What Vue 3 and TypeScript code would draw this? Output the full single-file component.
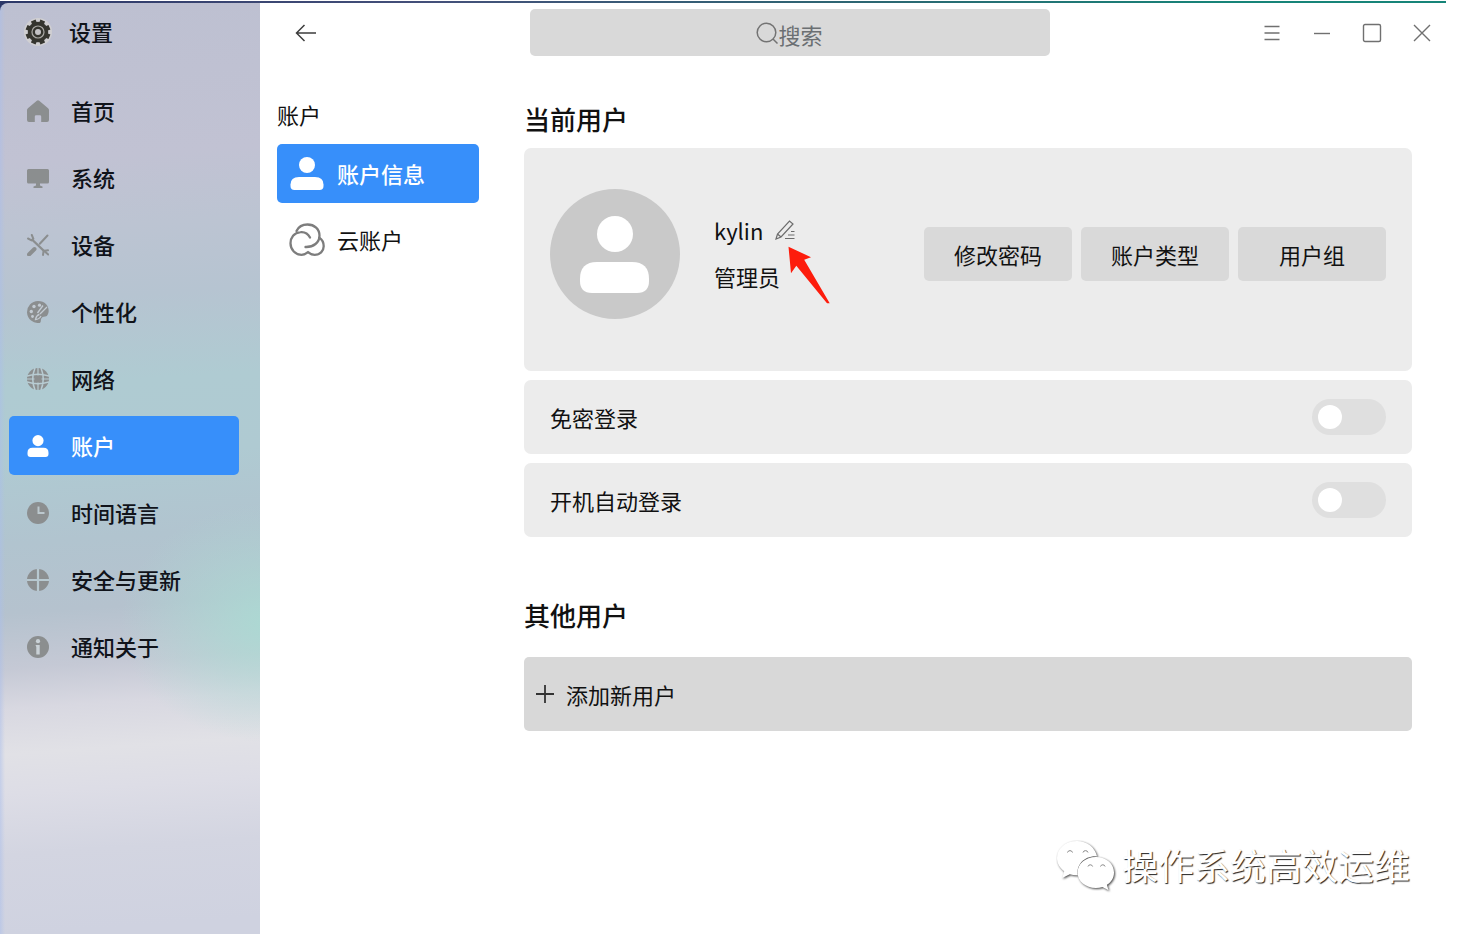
<script setup lang="ts">
import { ref } from 'vue'

interface NavItem {
  id: string
  label: string
}

const navItems: NavItem[] = [
  { id: 'home', label: '首页' },
  { id: 'system', label: '系统' },
  { id: 'device', label: '设备' },
  { id: 'personal', label: '个性化' },
  { id: 'network', label: '网络' },
  { id: 'account', label: '账户' },
  { id: 'time', label: '时间语言' },
  { id: 'update', label: '安全与更新' },
  { id: 'about', label: '通知关于' },
]

const active = ref<string>('account')
const page = ref<string>('info')
const query = ref<string>('')
const noPassword = ref<boolean>(false)
const autoLogin = ref<boolean>(false)
const accountActions: string[] = ['修改密码', '账户类型', '用户组']
</script>

<template>
  <div class="desktop">
    <div class="window">
      <aside class="sidebar">
        <div class="brand">
          <svg class="brand-icon" viewBox="0 0 30 30" aria-hidden="true">
            <circle cx="15" cy="15" r="14" fill="#d0cfd2" />
            <circle cx="15" cy="15" r="8" fill="none" stroke="#35352f" stroke-width="4.500" />
            <g stroke="#35352f" stroke-width="5">
              <path d="M15 2.6v4M15 23.4v4M2.6 15h4M23.4 15h4" transform="rotate(22.5 15 15)" />
              <path d="M15 2.6v4M15 23.4v4M2.6 15h4M23.4 15h4" transform="rotate(67.5 15 15)" />
            </g>
            <circle cx="15" cy="15" r="6.600" fill="#a9a8a4" />
            <circle cx="15" cy="15" r="4.200" fill="#c4c3c6" stroke="#35352f" stroke-width="2.400" />
          </svg>
          <span>设置</span>
        </div>
        <nav class="nav">
          <button
            v-for="item in navItems"
            :key="item.id"
            type="button"
            class="nav-item"
            :class="{ active: active === item.id }"
            @click="active = item.id"
          >
            <svg class="nav-icon" viewBox="0 0 22 22" aria-hidden="true">
              <path
                v-if="item.id === 'home'"
                d="M9.8.7a2 2 0 0 1 2.4 0l8.6 7.4q1.2 1.1 1.2 2V20q0 2-2 2h-5.800v-5.500q0-1.300-1.300-1.300h-3.800q-1.300 0-1.300 1.300V22H2q-2 0-2-2v-9.900q0-1 1.200-2z"
                fill="currentColor"
              />
              <path
                v-else-if="item.id === 'system'"
                d="M1.500 2h19q1.500 0 1.500 1.500v11.500q0 1.500-1.500 1.500H13v2l2.500 1v1.500h-9v-1.500l2.500-1v-2H1.500Q0 16.500 0 15V3.500Q0 2 1.500 2z"
                fill="currentColor"
              />
              <g v-else-if="item.id === 'device'" fill="none" stroke="currentColor" stroke-linecap="round">
                <path d="M5.500 6l11 10.500" stroke-width="2.400" />
                <path d="M1 4.500l3.500 1.800 1.800-1.600L4.800 1M16 21l.6-4.200 4.400-.6M21.200 20.500l-2.800-2.600" stroke-width="2" />
                <path d="M20.500 1.500L12.800 9.800" stroke-width="2" />
                <path d="M7.500 15l-5.500 5.500" stroke-width="4" />
              </g>
              <g v-else-if="item.id === 'personal'">
                <path
                  d="M11 0a11 11 0 1 0 1.500 21.900c2-.4 1-3 1.800-4.500 1-2 3.500-1.400 5.600-2.400C24 10 21 0 11 0z"
                  fill="currentColor"
                />
                <g fill="#c3cbd3">
                  <circle cx="7" cy="5.500" r="1.700" />
                  <circle cx="12.500" cy="4.200" r="1.600" />
                  <circle cx="4.300" cy="10.500" r="1.700" />
                  <circle cx="5.500" cy="15.500" r="1.400" />
                </g>
                <path d="M20 6L13 13M16 4.500L10.500 12M12.500 13.500q-3 .500-4 5 3.500 0 5.500-3.500" stroke="#c3cbd3" stroke-width="1.300" fill="none" />
              </g>
              <g v-else-if="item.id === 'network'">
                <circle cx="11" cy="11" r="11" fill="currentColor" />
                <g fill="none" stroke="#b8ccd3" stroke-width="1.500">
                  <path d="M8 0Q3.500 11 8 22M14 0q4.500 11 0 22M0 8q11-3.500 22 0M0 14q11 3.500 22 0" />
                  <path d="M11 0v7.500M11 14.500v7.500M0 11h7.500M14.500 11h7.500" stroke-width="1.200" />
                </g>
              </g>
              <path
                v-else-if="item.id === 'account'"
                d="M11 0a5.600 5.600 0 1 1 0 11.200A5.600 5.600 0 0 1 11 0zM5.500 12.800h11q5 0 5 5V19q0 3-3 3h-15q-3 0-3-3v-1.200q0-5 5-5z"
                fill="currentColor"
              />
              <g v-else-if="item.id === 'time'">
                <circle cx="11" cy="11" r="11" fill="currentColor" />
                <path d="M11.500 4.500v6.500h6" fill="none" stroke="#bcc8ce" stroke-width="2" />
              </g>
              <g v-else-if="item.id === 'update'">
                <circle cx="11" cy="11" r="11" fill="currentColor" />
                <path d="M11 0v22M0 11h22" stroke="#b8c9d0" stroke-width="2.200" />
              </g>
              <g v-else>
                <circle cx="11" cy="11" r="11" fill="currentColor" />
                <circle cx="11" cy="5.200" r="2.100" fill="#c9d1d6" />
                <path d="M8.500 9h4.200v9.500H9.300v-7.500z" fill="#c9d1d6" />
              </g>
            </svg>
            <span>{{ item.label }}</span>
          </button>
        </nav>
      </aside>

      <div class="content">
        <header class="titlebar">
          <button type="button" class="back" aria-label="返回">
            <svg viewBox="0 0 22 18" width="22" height="18" fill="none" stroke="#3d3d3d" stroke-width="1.500">
              <path d="M21 9H1.500M9.500 1L1.500 9l8 8" />
            </svg>
          </button>
          <label class="search">
            <svg viewBox="0 0 22 22" width="22" height="22" fill="none" stroke="#737373" stroke-width="1.500" aria-hidden="true">
              <circle cx="10.500" cy="10.500" r="9.300" />
              <path d="M17 17l4.500 4.500" />
            </svg>
            <input v-model="query" type="text" placeholder="搜索" aria-label="搜索" />
          </label>
          <div class="controls">
            <button type="button" aria-label="菜单">
              <svg viewBox="0 0 20 20"><path d="M2.500 3.500h15M2.500 10h15M2.500 16.500h15" /></svg>
            </button>
            <button type="button" aria-label="最小化">
              <svg viewBox="0 0 20 20"><path d="M2 10.500h16" /></svg>
            </button>
            <button type="button" aria-label="最大化">
              <svg viewBox="0 0 20 20"><rect x="1.500" y="1.500" width="17" height="17" rx="1.500" /></svg>
            </button>
            <button type="button" aria-label="关闭">
              <svg viewBox="0 0 20 20"><path d="M2 2l16 16M18 2L2 18" /></svg>
            </button>
          </div>
        </header>

        <div class="body">
          <nav class="subnav">
            <h2 class="subnav-title">账户</h2>
            <button type="button" class="sub-item" :class="{ active: page === 'info' }" @click="page = 'info'">
              <svg viewBox="0 0 36 36" width="36" height="36" fill="currentColor" aria-hidden="true">
                <circle cx="18" cy="9" r="8" />
                <path d="M10 21h16q8.500 0 8.500 7.500v1.500q0 4-4 4h-25q-4 0-4-4v-1.500q0-7.500 8.500-7.500z" />
              </svg>
              <span>账户信息</span>
            </button>
            <button type="button" class="sub-item" :class="{ active: page === 'cloud' }" @click="page = 'cloud'">
              <svg viewBox="0 0 36 34" width="36" height="34" fill="none" stroke="#7d7d7d" stroke-width="2.300" stroke-linecap="round" aria-hidden="true">
                <path d="M7.500 8C9.500 3.800 13.500 1.500 18.500 1.500c7 0 12 4.700 12 11.200C30.500 19.500 24.500 24.300 16.500 24" />
                <path d="M21 14.500C19 10.500 15.500 8.700 11.500 9.100 5 9.600 1.500 14.800 1.500 20.300c0 6.700 5 11.500 11 11.500 3 0 5-1.300 6.500-2.600 1.800 1.700 4.300 2.600 6.700 2.600 5.200 0 9-3.800 9-8.600 0-4-1.500-6.700-4.500-8.500" />
              </svg>
              <span>云账户</span>
            </button>
          </nav>

          <main class="main">
            <h1 class="heading">当前用户</h1>
            <section class="panel profile">
              <svg class="avatar" viewBox="0 0 130 130" aria-hidden="true">
                <circle cx="65" cy="65" r="65" fill="#c9c9c9" />
                <circle cx="65" cy="45" r="18" fill="#fff" />
                <path d="M47 73h35q17 0 17 17v2q0 12-12 12H42q-12 0-12-12v-2q0-17 17-17z" fill="#fff" />
              </svg>
              <div class="identity">
                <div class="name-row">
                  <span>kylin</span>
                  <button type="button" class="edit" aria-label="修改用户名">
                    <svg viewBox="0 0 20 20" width="20" height="20" fill="none" stroke="#6c6c6c" stroke-width="1.200">
                      <path d="M1 19l1.500-5L14.500 1l3.500 3L6 17zM2.500 14L6 17" />
                      <path d="M16 11.500h3.500M13 15h6.500M10 18.500h9.500" />
                    </svg>
                  </button>
                  <svg class="pointer" viewBox="0 0 42 58" width="42" height="58" aria-hidden="true">
                    <path d="M.5.700L23 11.200l-6.800 2.600L41.700 57.300 39 57.300 8.300 19.700 3 27.300z" fill="#fd1c0c" />
                  </svg>
                </div>
                <span>管理员</span>
              </div>
              <div class="actions">
                <button v-for="action in accountActions" :key="action" type="button">{{ action }}</button>
              </div>
            </section>
            <label class="panel setting">
              <span>免密登录</span>
              <input v-model="noPassword" class="switch" type="checkbox" role="switch" />
            </label>
            <label class="panel setting">
              <span>开机自动登录</span>
              <input v-model="autoLogin" class="switch" type="checkbox" role="switch" />
            </label>
            <h1 class="heading others">其他用户</h1>
            <button type="button" class="add">
              <svg viewBox="0 0 18 18" width="18" height="18" stroke="#333" stroke-width="1.800" aria-hidden="true">
                <path d="M9 0v18M0 9h18" />
              </svg>
              <span>添加新用户</span>
            </button>
          </main>
        </div>
      </div>
    </div>

    <div class="watermark">
      <svg viewBox="0 0 60 52" width="60" height="52" aria-hidden="true">
        <path
          d="M21 1C9.500 1 1 8.500 1 18c0 5.500 2.800 10 7.200 13.200L6.200 38l7.600-3.800c2.500.8 5 1.100 8 1C20 25 28 15.500 41 16.300 39 7.500 31 1 21 1z"
        />
        <path
          d="M40 17c-10.500 0-18.500 7-18.500 15.500S29.500 48 40 48c2.200 0 4.500-.4 6.500-1l6 3.200-1.600-5.400C55.500 42 58 37.600 58 32.500 58 24 50.500 17 40 17z"
        />
        <g class="eyes">
          <path d="M11.500 12.500a2.600 2.600 0 0 1 5 0M27 12.500a2.600 2.600 0 0 1 5 0M32 26.500a2.400 2.400 0 0 1 4.600 0M44.500 26.500a2.400 2.400 0 0 1 4.600 0" />
        </g>
      </svg>
      <span>操作系统高效运维</span>
    </div>
  </div>
</template>

<style>
html,
body {
  background: #fff;
}
</style>

<style scoped>
.desktop {
  position: relative;
  box-sizing: border-box;
  min-height: 100vh;
  padding: 1px 12px 0 0;
  display: flex;
  font-family: 'Noto Sans CJK SC', 'Noto Sans', sans-serif;
  font-size: 22px;
  line-height: 32px;
  color: #111;
}

button {
  font: inherit;
  color: inherit;
  border: 0;
  padding: 0;
  background: none;
  cursor: pointer;
}

svg {
  display: block;
  flex: none;
}

.window {
  flex: 1;
  display: flex;
  min-width: 0;
  padding-top: 2px;
  background: linear-gradient(90deg, #2c3868, #44507a 30%, #2c6672 60%, #168478 85%) top / 100% 12px no-repeat;
}

.sidebar {
  flex: none;
  box-sizing: border-box;
  width: 260px;
  padding: 12px 21px 0 9px;
  border-top-left-radius: 8px;
  font-weight: 500;
  color: #10131a;
  background:
    linear-gradient(90deg, rgba(170, 190, 235, 0.5), rgba(170, 190, 235, 0) 5px),
    radial-gradient(ellipse 150px 120px at 270px 620px, rgba(170, 219, 211, 0.9), rgba(170, 219, 211, 0)),
    linear-gradient(
      176deg,
      #bdc0d1 0,
      #c1c2d3 160px,
      #bcc4d2 230px,
      #b6c4d1 300px,
      #afcbd2 385px,
      #afcad2 460px,
      #b1c4cf 540px,
      #b5c2ce 610px,
      #c5c9d5 665px,
      #d8d8e1 705px,
      #e1e1e6 750px,
      #dddde6 790px,
      #d3d5e1 850px,
      #cfd2e0 930px
    );
}

.brand {
  display: flex;
  align-items: center;
  gap: 16px;
  padding-left: 14px;
}

.brand span,
.nav-item span,
.sub-item span {
  padding-bottom: 2px;
}

.brand-icon {
  width: 30px;
  height: 30px;
}

.nav {
  display: flex;
  flex-direction: column;
  gap: 8px;
  margin-top: 32px;
}

.nav-item {
  display: flex;
  align-items: center;
  gap: 22px;
  height: 59px;
  padding-left: 18px;
  border-radius: 5px;
  text-align: left;
}

.nav-icon {
  width: 22px;
  height: 22px;
  color: #8b8e8f;
}

.nav-item.active,
.sub-item.active {
  background: #378ffa;
  color: #fff;
}

.nav-item.active .nav-icon {
  color: #fff;
}

.content {
  flex: 1;
  min-width: 0;
  background: #fff;
}

.titlebar {
  display: flex;
  align-items: center;
  justify-content: space-between;
  padding: 6px 14px 0 35px;
}

.back {
  width: 22px;
}

.search {
  display: flex;
  align-items: center;
  justify-content: center;
  flex: 0 1 520px;
  height: 47px;
  border-radius: 5px;
  background: #d9d9d9;
}

.search input {
  width: 46px;
  height: 40px;
  padding: 2px 0 0 1px;
  box-sizing: border-box;
  border: 0;
  outline: 0;
  background: none;
  font: inherit;
  color: #333;
}

.search:focus-within input {
  width: 60%;
}

.search input::placeholder {
  color: #6b6f72;
  opacity: 1;
}

.controls {
  display: flex;
  gap: 30px;
}

.controls svg {
  width: 20px;
  height: 20px;
  fill: none;
  stroke: #707070;
  stroke-width: 1.400;
}

.body {
  display: flex;
}

.subnav {
  flex: none;
  box-sizing: border-box;
  width: 264px;
  padding: 42px 45px 0 17px;
  display: flex;
  flex-direction: column;
}

.subnav-title {
  margin: 0 0 14px;
  font-size: 22px;
  font-weight: 400;
  line-height: 32px;
}

.sub-item {
  display: flex;
  align-items: center;
  gap: 12px;
  height: 59px;
  padding-left: 12px;
  margin-bottom: 7px;
  border-radius: 5px;
  text-align: left;
}

.sub-item.active {
  font-weight: 500;
}

.main {
  flex: 1;
  min-width: 0;
  padding: 43px 34px 0 0;
  display: flex;
  flex-direction: column;
  gap: 9px;
}

.heading {
  margin: 0;
  font-size: 26px;
  font-weight: 500;
  line-height: 40px;
  color: #111;
}

.heading.others {
  margin: 49px 0 13px;
}

.panel {
  box-sizing: border-box;
  border-radius: 7px;
  background: #ececec;
  padding: 0 26px;
  display: flex;
}

.profile {
  padding-top: 41px;
  padding-bottom: 52px;
  align-items: center;
}

.avatar {
  width: 130px;
  height: 130px;
}

.identity {
  display: flex;
  flex-direction: column;
  gap: 14px;
  margin-left: 34px;
  padding-bottom: 2px;
}

.name-row {
  position: relative;
  display: flex;
  align-items: center;
  gap: 12px;
}

.pointer {
  position: absolute;
  left: 74px;
  top: 32px;
}

.actions {
  margin-left: auto;
  display: flex;
  gap: 9px;
}

.actions button {
  width: 148px;
  height: 54px;
  border-radius: 5px;
  background: #d9d9d9;
}

.setting {
  height: 74px;
  align-items: center;
  justify-content: space-between;
}

.switch {
  appearance: none;
  position: relative;
  width: 74px;
  height: 36px;
  margin: 0;
  border-radius: 18px;
  background: #dfdfdf;
  cursor: pointer;
}

.switch::before {
  content: '';
  position: absolute;
  left: 6px;
  top: 6px;
  width: 24px;
  height: 24px;
  border-radius: 50%;
  background: #fff;
}

.switch:checked {
  background: #378ffa;
}

.switch:checked::before {
  left: 44px;
}

.add {
  display: flex;
  align-items: center;
  gap: 12px;
  height: 74px;
  padding-left: 12px;
  border-radius: 5px;
  background: #d8d8d8;
  text-align: left;
}

.watermark {
  position: absolute;
  right: 48px;
  bottom: 40px;
  display: flex;
  align-items: center;
  gap: 6px;
  font-size: 36px;
  line-height: 52px;
  color: #fff;
  text-shadow: 1px 1px 1px #222;
  pointer-events: none;
}

.watermark span {
  padding-bottom: 4px;
}

.watermark svg {
  fill: #fff;
  filter: drop-shadow(1px 1px 1px #444);
}

.eyes {
  fill: none;
  stroke: #888;
  stroke-width: 1;
}
</style>
